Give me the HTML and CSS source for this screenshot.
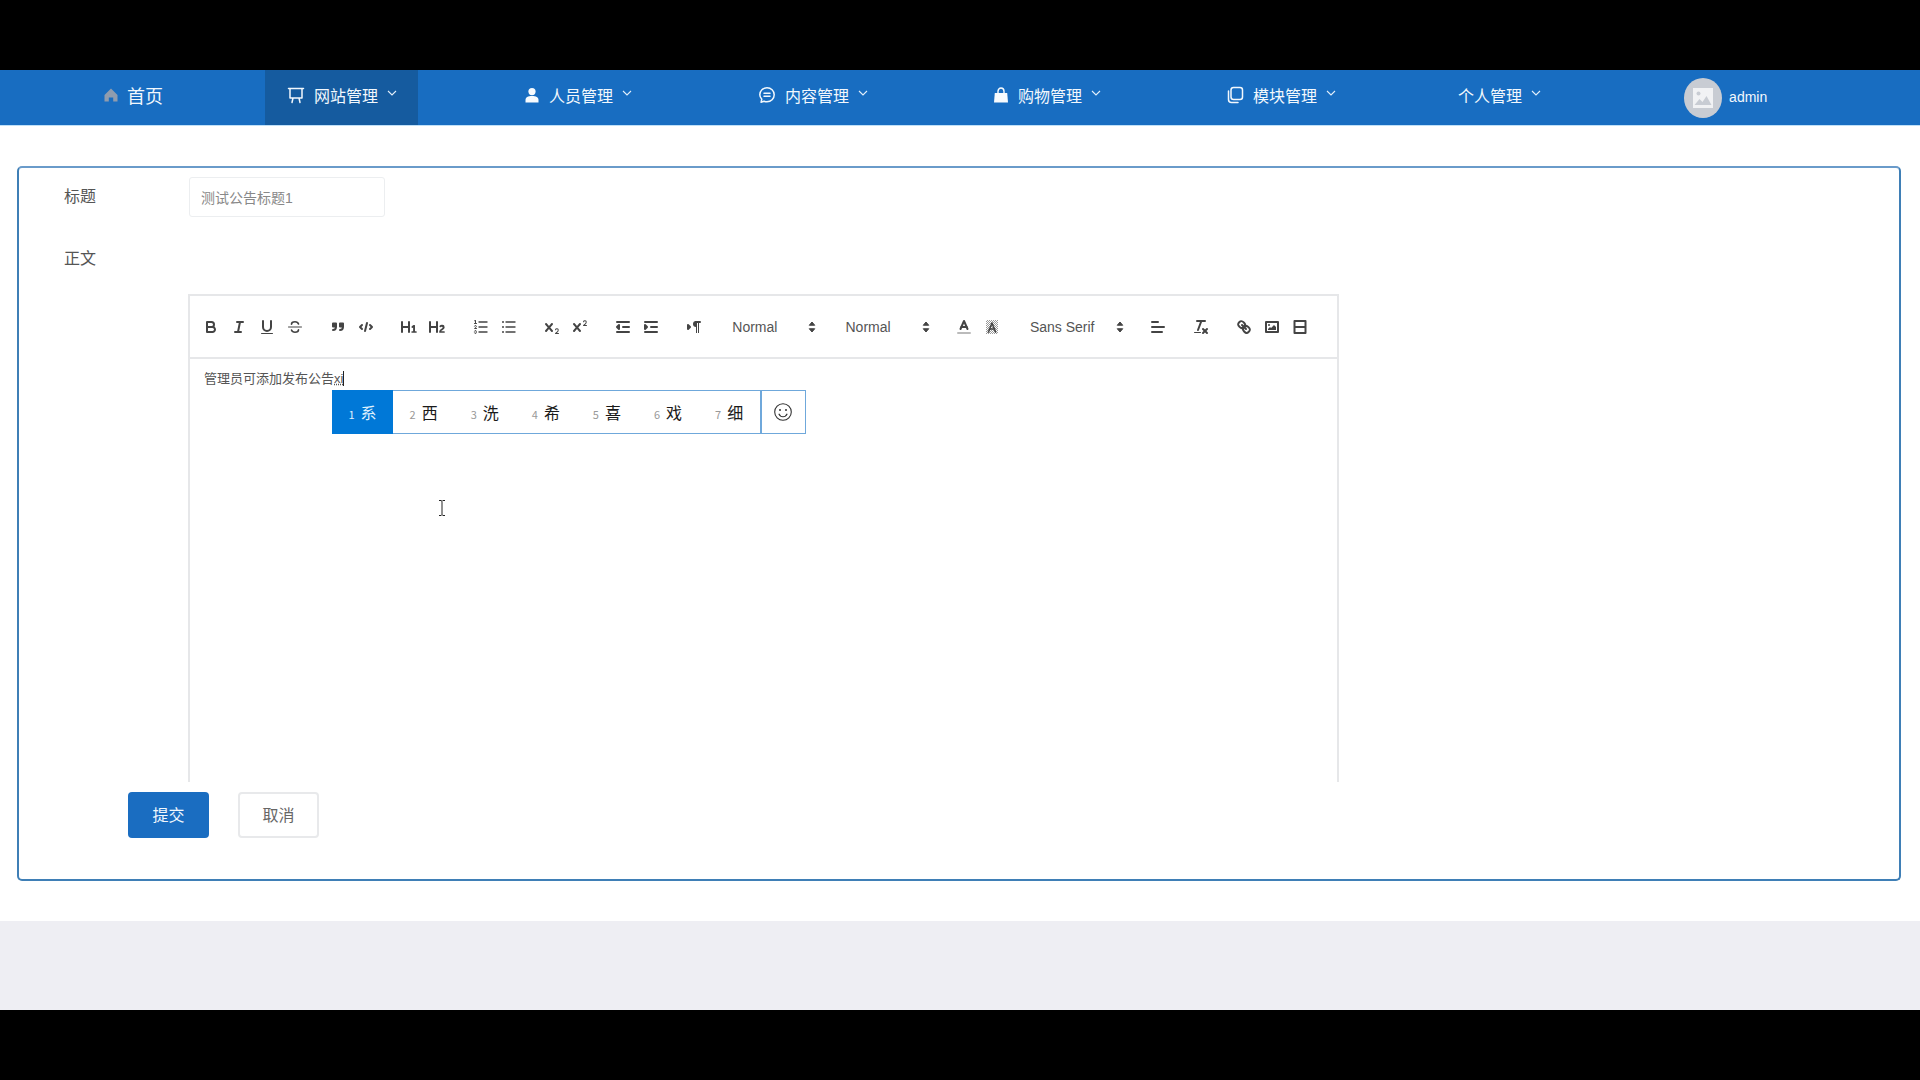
FILE: index.html
```html
<!doctype html>
<html>
<head>
  <meta charset="utf-8">
  <title>公告</title>
  <link rel="stylesheet" href="styles.css">
</head>
<body>
  <div class="nav">
    <a class="nav-home">
      <svg class="home-icon" viewBox="0 0 16 16" width="16" height="16"><path d="M8 1.5 1.5 8v6.5h4.3v-4h4.4v4h4.3V8z"/></svg>
      <span>首页</span>
    </a>
    <a class="nav-item active">
      <svg class="line-icon" viewBox="0 0 18 18" width="18" height="18"><path d="M1.5 2.5h15M3 2.5v9.5h12V2.5M6 12l-1 4.5M12 12l1 4.5"/></svg>
      <span>网站管理</span>
      <svg class="chev" viewBox="0 0 10 6" width="10" height="6"><path d="M1 1l4 4 4-4"/></svg>
    </a>
    <a class="nav-item">
      <svg class="fill-icon" viewBox="0 0 16 16" width="16" height="16"><circle cx="8" cy="4.6" r="3.6"/><path d="M1.5 15.5v-2.6c0-2.4 2.4-3.9 6.5-3.9s6.5 1.5 6.5 3.9v2.6z"/></svg>
      <span>人员管理</span>
      <svg class="chev" viewBox="0 0 10 6" width="10" height="6"><path d="M1 1l4 4 4-4"/></svg>
    </a>
    <a class="nav-item tight">
      <svg class="line-icon" viewBox="0 0 18 18" width="18" height="18"><path d="M9 1.8c4 0 7.2 3 7.2 7s-3.200 7-7.200 7c-1 0-2-.2-2.900-.6l-3 1 .7-3C2.600 11.900 1.800 10.400 1.800 8.800c0-4 3.200-7 7.200-7zM6 7.300h6M6 10.300h6"/></svg>
      <span>内容管理</span>
      <svg class="chev" viewBox="0 0 10 6" width="10" height="6"><path d="M1 1l4 4 4-4"/></svg>
    </a>
    <a class="nav-item tight">
      <svg class="fill-icon" viewBox="0 0 16 16" width="16" height="16"><path d="M1.800 6h12.400l.8 9.500H1z"/><path class="bag-loop" d="M5 7.500V4.200C5 2.400 6.300 1 8 1s3 1.400 3 3.200v3.300"/></svg>
      <span>购物管理</span>
      <svg class="chev" viewBox="0 0 10 6" width="10" height="6"><path d="M1 1l4 4 4-4"/></svg>
    </a>
    <a class="nav-item tighter">
      <svg class="line-icon" viewBox="0 0 18 18" width="18" height="18"><rect x="5" y="1.500" width="11.500" height="12" rx="2.500"/><path d="M2.500 5v8.500c0 1.700 1.300 3 3 3H12"/></svg>
      <span>模块管理</span>
      <svg class="chev" viewBox="0 0 10 6" width="10" height="6"><path d="M1 1l4 4 4-4"/></svg>
    </a>
    <a class="nav-item">
      <span>个人管理</span>
      <svg class="chev" viewBox="0 0 10 6" width="10" height="6"><path d="M1 1l4 4 4-4"/></svg>
    </a>
    <div class="nav-user">
      <div class="avatar">
        <svg viewBox="0 0 20 20" width="20" height="20"><rect width="20" height="20" fill="#f1f2f4"/><circle cx="5.500" cy="5.500" r="2" fill="#c8ccd3"/><path d="M1.500 17l5-6 3 3 4-6 5 9z" fill="#c8ccd3"/></svg>
      </div>
      <span>admin</span>
    </div>
  </div>

  <div class="content">
    <div class="card">
      <div class="row title-row">
        <label>标题</label>
        <input class="title-input" type="text" value="测试公告标题1">
      </div>
      <div class="row body-label">
        <label>正文</label>
      </div>

      <div class="editor">
        <div class="toolbar">
          <span class="formats">
            <button><svg viewBox="0 0 18 18"><path d="M5,4H9.500A2.500,2.500,0,0,1,12,6.500v0A2.500,2.500,0,0,1,9.500,9H5V4Z"/><path d="M5,9h5.500A2.500,2.500,0,0,1,13,11.500v0A2.500,2.500,0,0,1,10.500,14H5V9Z"/></svg></button>
            <button><svg viewBox="0 0 18 18"><line x1="7" x2="13" y1="4" y2="4"/><line x1="5" x2="11" y1="14" y2="14"/><line x1="8" x2="10" y1="14" y2="4"/></svg></button>
            <button><svg viewBox="0 0 18 18"><path d="M5,3V9a4,4,0,0,0,4,4H9a4,4,0,0,0,4-4V3"/><rect class="f" height="1" rx="0.500" width="12" x="3" y="15"/></svg></button>
            <button><svg viewBox="0 0 18 18"><line class="t" x1="15.500" x2="2.500" y1="9" y2="9"/><path class="t15" d="M12.500 6C12 4.500 10.600 3.800 9 3.800c-2 0-3.500 1-3.500 2.500M5.500 12c.5 1.500 1.900 2.200 3.500 2.200 2 0 3.500-1 3.500-2.500"/></svg></button>
          </span>
          <span class="formats">
            <button><svg viewBox="0 0 18 18"><rect class="fs" height="3" width="3" x="4" y="5.500"/><rect class="fs" height="3" width="3" x="11" y="5.500"/><path d="M7,8.500c0,2.500-1.500,3.500-3,3.500"/><path d="M14,8.500c0,2.500-1.500,3.500-3,3.500"/></svg></button>
            <button><svg viewBox="0 0 18 18"><polyline points="5 7 3 9 5 11"/><polyline points="13 7 15 9 13 11"/><line x1="10" x2="8" y1="5" y2="13"/></svg></button>
          </span>
          <span class="formats">
            <button><svg viewBox="0 0 18 18"><path class="f" d="M10,4V14a1,1,0,0,1-2,0V10H3v4a1,1,0,0,1-2,0V4A1,1,0,0,1,3,4V8H8V4a1,1,0,0,1,2,0Zm6.068,9.209H14.990V7.599a.541.541,0,0,0-.605-.605h-.627a1.011,1.011,0,0,0-.748.297L11.645,8.566a.544.544,0,0,0-.022.858l.286.308a.539.539,0,0,0,.847.033l.099-.088a1.214,1.214,0,0,0,.242-.353h.022s-.011.309-.011.605V13.209H12.041a.541.541,0,0,0-.605.605v.44a.541.541,0,0,0,.605.605h4.027a.541.541,0,0,0,.605-.605v-.44A.541.541,0,0,0,16.068,13.209Z"/></svg></button>
            <button><svg viewBox="0 0 18 18"><path class="f" d="M16.740,13.814v.44a.541.541,0,0,1-.605.605H11.855a.584.584,0,0,1-.649-.605V14.013c0-2.905,3.399-3.422,3.399-4.555a.777.777,0,0,0-.847-.781,1.177,1.177,0,0,0-.836.385c-.275.264-.561.374-.858.132l-.429-.341c-.308-.242-.385-.518-.154-.814a2.972,2.972,0,0,1,2.454-1.177,2.454,2.454,0,0,1,2.684,2.409c0,2.453-3.179,2.927-3.278,3.938h2.794A.541.541,0,0,1,16.740,13.814ZM9,3A1,1,0,0,0,8,4V8H3V4A1,1,0,0,0,1,4V14a1,1,0,0,0,2,0V10H8v4a1,1,0,0,0,2,0V4A1,1,0,0,0,9,3Z"/></svg></button>
          </span>
          <span class="formats">
            <button><svg viewBox="0 0 18 18"><line class="th" x1="7" x2="15" y1="4" y2="4"/><line class="th" x1="7" x2="15" y1="9" y2="9"/><line class="th" x1="7" x2="15" y1="14" y2="14"/><line class="t" x1="2.500" x2="4.500" y1="5.500" y2="5.500"/><path class="f" d="M3.500,6A0.500,0.500,0,0,1,3,5.500V3.085l-0.276.138A0.500,0.500,0,0,1,2.053,3c-0.124-.247-0.023-0.324.224-0.447l1-.5A0.500,0.500,0,0,1,4,2.500v3A0.500,0.500,0,0,1,3.500,6Z"/><path class="t" d="M4.500,10.500h-2c0-.234,1.850-1.076,1.850-2.234A0.959,0.959,0,0,0,2.500,8.156"/><path class="t" d="M2.500,14.846a0.959,0.959,0,0,0,1.850-.109A0.700,0.700,0,0,0,3.750,14a0.688,0.688,0,0,0,.6-0.736,0.959,0.959,0,0,0-1.850-.109"/></svg></button>
            <button><svg viewBox="0 0 18 18"><line class="th" x1="6" x2="15" y1="4" y2="4"/><line class="th" x1="6" x2="15" y1="9" y2="9"/><line class="th" x1="6" x2="15" y1="14" y2="14"/><line x1="3" x2="3" y1="4" y2="4"/><line x1="3" x2="3" y1="9" y2="9"/><line x1="3" x2="3" y1="14" y2="14"/></svg></button>
          </span>
          <span class="formats">
            <button><svg viewBox="0 0 18 18"><path class="f" d="M15.500,15H13.861a3.858,3.858,0,0,0,1.914-2.975,1.800,1.800,0,0,0-1.600-1.751A1.921,1.921,0,0,0,12.021,11.700a0.500,0.500,0,1,0,.957.291,0.914,0.914,0,0,1,1.053-.725,0.810,0.810,0,0,1,.744.762c0,1.076-1.170,1.870-1.940,2.431A1.456,1.456,0,0,0,12,15.500a0.500,0.500,0,0,0,.5.5h3A0.500,0.500,0,0,0,15.500,15Z"/><path class="f" d="M9.650,5.241a1,1,0,0,0-1.409.108L6,7.964,3.759,5.349A1,1,0,0,0,2.241,6.649L4.684,9.500,2.241,12.350A1,1,0,0,0,3.759,13.650L6,11.036,8.241,13.650a1,1,0,1,0,1.518-1.300L7.316,9.500,9.759,6.651A1,1,0,0,0,9.650,5.241Z"/></svg></button>
            <button><svg viewBox="0 0 18 18"><path class="f" d="M15.500,7H13.861a4.015,4.015,0,0,0,1.914-2.975,1.800,1.800,0,0,0-1.600-1.751A1.922,1.922,0,0,0,12.021,3.700a0.500,0.500,0,1,0,.957.291,0.917,0.917,0,0,1,1.053-.725,0.810,0.810,0,0,1,.744.762c0,1.077-1.164,1.925-1.934,2.486A1.423,1.423,0,0,0,12,7.500a0.500,0.500,0,0,0,.5.5h3A0.500,0.500,0,0,0,15.500,7Z"/><path class="f" d="M9.651,5.241a1,1,0,0,0-1.410.108L6,7.964,3.759,5.349a1,1,0,1,0-1.519,1.300L4.683,9.500,2.241,12.350a1,1,0,1,0,1.519,1.300L6,11.036l2.241,2.615a1,1,0,0,0,1.519-1.300L7.317,9.500,9.759,6.651A1,1,0,0,0,9.651,5.241Z"/></svg></button>
          </span>
          <span class="formats">
            <button><svg viewBox="0 0 18 18"><line x1="3" x2="15" y1="14" y2="14"/><line x1="3" x2="15" y1="4" y2="4"/><line x1="9" x2="15" y1="9" y2="9"/><polyline class="fs" points="5 7 5 11 3 9 5 7"/></svg></button>
            <button><svg viewBox="0 0 18 18"><line x1="3" x2="15" y1="14" y2="14"/><line x1="3" x2="15" y1="4" y2="4"/><line x1="9" x2="15" y1="9" y2="9"/><polyline class="fs" points="3 7 3 11 5 9 3 7"/></svg></button>
          </span>
          <span class="formats">
            <button><svg viewBox="0 0 18 18"><polygon class="fs" points="3 11 5 9 3 7 3 11"/><line x1="15" x2="11" y1="4" y2="4"/><path class="f" d="M11,3a3,3,0,0,0,0,6h1V3H11Z"/><rect class="f" height="11" width="1" x="11" y="4"/><rect class="f" height="11" width="1" x="13" y="4"/></svg></button>
          </span>
          <span class="formats">
            <span class="picker">Normal<svg viewBox="0 0 18 18"><polygon class="fs1" points="6.500 11 9 14 11.500 11"/><polygon class="fs1" points="6.500 7 9 4 11.500 7"/></svg></span>
          </span>
          <span class="formats">
            <span class="picker">Normal<svg viewBox="0 0 18 18"><polygon class="fs1" points="6.500 11 9 14 11.500 11"/><polygon class="fs1" points="6.500 7 9 4 11.500 7"/></svg></span>
          </span>
          <span class="formats">
            <button><svg viewBox="0 0 18 18"><line class="under" x1="3" x2="15" y1="15" y2="15"/><polyline points="5.500 11 9 3 12.500 11"/><line x1="11.630" x2="6.380" y1="9" y2="9"/></svg></button>
            <button><svg viewBox="0 0 18 18"><defs><pattern id="hatch" width="2" height="2" patternUnits="userSpaceOnUse"><rect width="1" height="1" fill="#9a9a9a" stroke="none"/><rect x="1" y="1" width="1" height="1" fill="#9a9a9a" stroke="none"/></pattern></defs><rect class="hatch" x="3" y="2" width="12" height="14"/><polyline class="t15" points="5.500 14 9 5 12.500 14"/><line class="t15" x1="11.630" x2="6.380" y1="11" y2="11"/></svg></button>
          </span>
          <span class="formats">
            <span class="picker font-picker">Sans Serif<svg viewBox="0 0 18 18"><polygon class="fs1" points="6.500 11 9 14 11.500 11"/><polygon class="fs1" points="6.500 7 9 4 11.500 7"/></svg></span>
          </span>
          <span class="formats">
            <button><svg viewBox="0 0 18 18"><line x1="3" x2="15" y1="9" y2="9"/><line x1="3" x2="13" y1="14" y2="14"/><line x1="3" x2="9" y1="4" y2="4"/></svg></button>
          </span>
          <span class="formats">
            <button><svg viewBox="0 0 18 18"><line x1="5" x2="13" y1="3" y2="3"/><line x1="6" x2="9.350" y1="12" y2="3"/><line x1="11" x2="15" y1="11" y2="15"/><line x1="15" x2="11" y1="11" y2="15"/><rect class="f" height="1" rx="0.500" width="7" x="2" y="14"/></svg></button>
          </span>
          <span class="formats">
            <button><svg viewBox="0 0 18 18"><line x1="7" x2="11" y1="7" y2="11"/><path d="M8.900,4.577a3.476,3.476,0,0,1,.36,4.679A3.476,3.476,0,0,1,4.577,8.900C3.185,7.500,2.035,6.400,4.217,4.217S7.500,3.185,8.900,4.577Z"/><path d="M13.423,9.100a3.476,3.476,0,0,0-4.679-.36,3.476,3.476,0,0,0,.36,4.679c1.392,1.392,2.500,2.542,4.679.36S14.815,10.500,13.423,9.100Z"/></svg></button>
            <button><svg viewBox="0 0 18 18"><rect x="3" y="4" width="12" height="10"/><circle class="f" cx="6" cy="7" r="1"/><polyline class="f" points="5 12 5 11 7 9 8 10 11 7 13 9 13 12 5 12"/></svg></button>
            <button><svg viewBox="0 0 18 18"><rect x="3.500" y="3" width="11" height="12"/><rect class="f" x="3.500" y="8" width="11" height="2"/></svg></button>
          </span>
        </div>

        <div class="edit-area">
          <p>管理员可添加发布公告<span class="composing">xi</span><span class="caret"></span></p>
          <div class="ime">
            <div class="cand selected"><i>1</i><b>系</b></div>
            <div class="cand"><i>2</i><b>西</b></div>
            <div class="cand"><i>3</i><b>洗</b></div>
            <div class="cand"><i>4</i><b>希</b></div>
            <div class="cand"><i>5</i><b>喜</b></div>
            <div class="cand"><i>6</i><b>戏</b></div>
            <div class="cand"><i>7</i><b>细</b></div>
            <div class="smile">
              <svg viewBox="0 0 20 20" width="20" height="20"><circle cx="10" cy="10" r="8.300"/><circle class="eye" cx="7" cy="8" r="1"/><circle class="eye" cx="13" cy="8" r="1"/><path d="M5.800 11.800c.9 2 2.400 3 4.200 3s3.300-1 4.200-3"/></svg>
            </div>
          </div>
          <svg class="ibeam" viewBox="0 0 8 16" width="8" height="16"><path d="M1 .5h2.200L4 1.300 4.800.5H7M4 1.300v13.400M1 15.500h2.200l.8-.8.8.8H7"/></svg>
        </div>
      </div>

      <div class="actions">
        <button class="btn btn-primary">提交</button>
        <button class="btn btn-default">取消</button>
      </div>
    </div>
  </div>
  <div class="footer"></div>
</body>
</html>
```

FILE: styles.css
```css
body {
  margin: 0;
  height: 1080px;
  box-sizing: border-box;
  padding: 70px 0;
  background: #000;
  overflow: hidden;
  font-family: "Liberation Sans", "Noto Sans CJK SC", sans-serif;
}

/* top bar */
.nav {
  display: flex;
  height: 55px;
  background: #186dc1;
  border-bottom: 1px solid #bfe0f8;
  color: #f2f8fd;
  font-size: 16px;
}
.nav-home {
  display: flex;
  align-items: center;
  gap: 8px;
  padding: 0 102px 5px 103px;
  font-size: 18px;
}
.home-icon {
  fill: #8f9cae;
}
.nav-item {
  display: flex;
  align-items: center;
  gap: 9px;
  padding: 0 21px 5px 22px;
  margin-right: 83px;
}
.nav-item.tight {
  margin-right: 82px;
}
.nav-item.tighter {
  margin-right: 79px;
}
.nav-item.active {
  background: #155b9f;
  margin-right: 84px;
}
.nav-item .chev {
  margin-top: -5px;
}
.chev {
  fill: none;
  stroke: #e3effa;
  stroke-width: 1.100;
}
.line-icon {
  fill: none;
  stroke: #f2f8fd;
  stroke-width: 1.500;
  stroke-linecap: round;
  stroke-linejoin: round;
}
.fill-icon {
  fill: #f7fbfe;
}
.bag-loop {
  fill: none;
  stroke: #f7fbfe;
  stroke-width: 1.400;
}
.nav-user {
  display: flex;
  align-items: center;
  gap: 7px;
  margin-left: 39px;
  font-size: 14px;
}
.nav-user span {
  margin-bottom: 2px;
}
.avatar {
  width: 38px;
  height: 40px;
  border-radius: 50%;
  background: #c8ccd3;
  display: flex;
  align-items: center;
  justify-content: center;
}

/* page body */
.content {
  height: 795px;
  box-sizing: border-box;
  padding: 40px 19px 0 17px;
  background: #fff;
}
.card {
  height: 715px;
  box-sizing: border-box;
  padding: 9px 0 0 0;
  border: 2px solid #3f7fb6;
  border-top-color: #6a9bca;
  border-radius: 5px;
}
.footer {
  height: 89px;
  background: #eeeef3;
}
.row {
  display: flex;
  padding-left: 45px;
  font-size: 16px;
  color: #555;
}
.row label {
  width: 125px;
}
.title-row {
  height: 41px;
}
.title-row label {
  line-height: 39px;
}
.title-input {
  width: 196px;
  height: 40px;
  box-sizing: border-box;
  padding: 0 11px 1px;
  border: 1px solid #eceef0;
  border-radius: 3px;
  color: #888;
  font-family: "Liberation Sans", "Noto Sans CJK SC", sans-serif;
  font-size: 14px;
  outline: none;
}
.body-label {
  height: 76px;
  padding-top: 29px;
  box-sizing: border-box;
  line-height: 24px;
}

/* editor */
.editor {
  width: 1151px;
  height: 488px;
  margin-left: 169px;
  box-sizing: border-box;
  border: 2px solid #e6e7e9;
  border-bottom: 0;
  display: flex;
  flex-direction: column;
}
.toolbar {
  display: flex;
  align-items: center;
  height: 61px;
  flex-shrink: 0;
  padding: 0 7px;
  border-bottom: 2px solid #e6e7e9;
}
.formats {
  display: flex;
  align-items: center;
  margin-right: 15.200px;
}
.toolbar button {
  width: 28px;
  height: 24px;
  padding: 3px 5px;
  border: 0;
  background: none;
}
.toolbar svg {
  display: block;
  width: 18px;
  height: 18px;
  fill: none;
  stroke: #444;
  stroke-width: 2;
  stroke-linecap: round;
  stroke-linejoin: round;
}
.toolbar .f {
  fill: #444;
  stroke: none;
}
.toolbar .fs {
  fill: #444;
}
.toolbar .fs1 {
  fill: #444;
  stroke-width: 1;
}
.toolbar .t {
  stroke-width: 1;
}
.toolbar .th {
  stroke-width: 1.400;
}
.toolbar .t15 {
  stroke-width: 1.600;
}
.toolbar .under {
  stroke: #bbb;
}
.toolbar .hatch {
  fill: url(#hatch);
  stroke: none;
}
.picker {
  display: flex;
  justify-content: space-between;
  align-items: center;
  width: 98px;
  box-sizing: border-box;
  padding-left: 9px;
  color: #555;
  font-size: 14px;
}
.font-picker {
  width: 108px;
  padding-left: 9px;
}

.edit-area {
  position: relative;
  flex: 1;
  padding: 9px 14px;
}
.edit-area p {
  margin: 0;
  font-size: 13px;
  line-height: 22px;
  color: #555;
}
.composing {
  text-decoration: underline dotted;
}
.caret {
  display: inline-block;
  width: 1px;
  height: 15px;
  background: #222;
  vertical-align: -3px;
}

/* input method candidate window, lies over the editor */
.ime {
  position: absolute;
  left: 142px;
  top: 31px;
  display: flex;
  width: 474px;
  height: 44px;
  box-sizing: border-box;
  background: #fff;
  border: 1px solid #6fa8db;
  font-family: "Noto Sans CJK SC", sans-serif;
}
.cand {
  display: flex;
  align-items: center;
  justify-content: center;
  gap: 6px;
  width: 61.100px;
  color: #1a1a1a;
  box-sizing: border-box;
}
.cand i {
  font-style: normal;
  font-size: 11px;
  color: #999;
  margin-top: 4px;
}
.cand b {
  font-weight: 400;
  font-size: 16px;
  line-height: 20px;
}
.cand.selected {
  margin: -1px 0 -1px -1px;
  background: #0078d7;
  color: #dff0fd;
}
.cand.selected i {
  color: #dff0fd;
}
.smile {
  display: flex;
  align-items: center;
  justify-content: center;
  flex: 1;
  border-left: 2px solid #6fa8db;
}
.smile svg {
  fill: none;
  stroke: #333;
  stroke-width: 1.100;
}
.smile .eye {
  fill: #333;
  stroke: none;
}
.ibeam {
  position: absolute;
  left: 248px;
  top: 141px;
  fill: none;
  stroke: #222;
  stroke-width: 1;
}

.actions {
  display: flex;
  gap: 29px;
  margin: 10px 0 0 109px;
}
.btn {
  width: 81px;
  height: 46px;
  box-sizing: border-box;
  padding: 0 0 2px;
  border-radius: 4px;
  font-family: "Liberation Sans", "Noto Sans CJK SC", sans-serif;
  font-size: 16px;
}
.btn-primary {
  border: 0;
  background: #1a6dc1;
  color: #f0f7fd;
}
.btn-default {
  border: 2px solid #e8e9eb;
  background: #fff;
  color: #666;
}
```
